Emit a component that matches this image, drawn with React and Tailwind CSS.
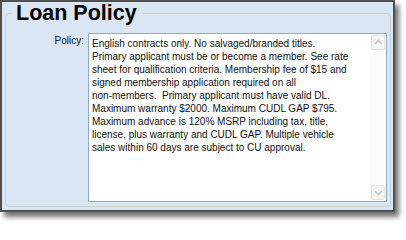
const policyLines = [
  "English contracts only. No salvaged/branded titles.",
  "Primary applicant must be or become a member. See rate",
  "sheet for qualification criteria. Membership fee of $15 and",
  "signed membership application required on all",
  "non-members.  Primary applicant must have valid DL.",
  "Maximum warranty $2000. Maximum CUDL GAP $795.",
  "Maximum advance is 120% MSRP including tax, title,",
  "license, plus warranty and CUDL GAP. Multiple vehicle",
  "sales within 60 days are subject to CU approval.",
];

function Chevron({ up }) {
  return (
    <svg width="9" height="6" viewBox="0 0 9 6">
      <path
        d={up ? "M1 5 L4.5 1.5 L8 5" : "M1 1 L4.5 4.5 L8 1"}
        fill="none"
        stroke="#c3c6c8"
        strokeWidth="1.6"
      />
    </svg>
  );
}

function ScrollButton({ up }) {
  return (
    <div className="w-[14px] h-[15px] flex items-center justify-center rounded-[2px] border border-[#e4e6de] bg-[#f5f6f2]">
      <Chevron up={up} />
    </div>
  );
}

export default function App() {
  return (
    <div className="w-[406px] h-[224px] bg-white">
      <div
        className="w-[395px] h-[212px] border-2 border-[#4f5052] bg-[#dbe6f4] flex shadow-[4px_5px_5px_rgba(0,0,0,0.55)]"
        style={{ fontFamily: '"Liberation Sans", Arial, sans-serif' }}
      >
        <fieldset className="flex-1 ml-[3px] mr-[2px] mb-[3px] border border-[#cfd4cf] rounded-[4px] flex">
          <legend className="ml-[6px] pl-[4px] pr-[5px] pt-[1px] text-[21.5px] font-bold leading-none text-black">
            Loan Policy
          </legend>
          <div className="flex flex-1 mt-[8px] mb-[4px] mr-[3px]">
            <div className="w-[78px] text-right pt-[2px] text-[10px] leading-[12px] text-[#111]">
              Policy:
            </div>
            <div className="ml-[4px] flex-1 flex border border-[#8faacb] bg-white">
              <div className="flex-1 pl-[3px] pt-[3px] text-[10px] leading-[13px] text-[#111]">
                {policyLines.map((line, i) => (
                  <div key={i} className="whitespace-pre">
                    {line}
                  </div>
                ))}
              </div>
              <div className="w-[16px] flex flex-col justify-between items-center py-[1px] bg-[#fbfbfa]">
                <ScrollButton up />
                <ScrollButton />
              </div>
            </div>
          </div>
        </fieldset>
      </div>
    </div>
  );
}
